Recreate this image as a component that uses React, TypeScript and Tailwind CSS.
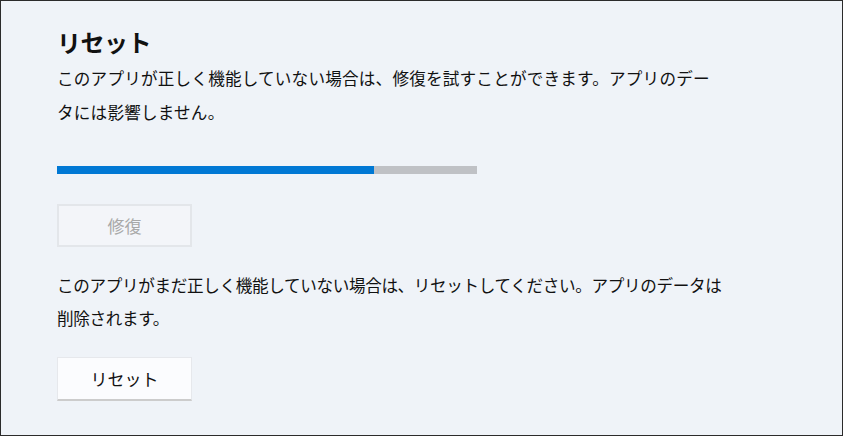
const font = { fontFamily: '"Noto Sans CJK JP", "Noto Sans", sans-serif' };

export default function App() {
  const progress = 75.5;

  return (
    <div
      className="w-[843px] h-[436px] border border-[#2b2b2b] bg-[#eff3f8] pl-[56px] pt-[25px] text-[#111111]"
      style={font}
    >
      <h1 className="text-[24px] font-bold leading-[32px] tracking-[-0.5px]">リセット</h1>

      <p className="mt-[3px] text-[16.6px] leading-[34px] tracking-[0.2px] whitespace-nowrap">
        このアプリが正しく機能していない場合は、修復を試すことができます。アプリのデー
        <br />
        タには影響しません。
      </p>

      {/* progress */}
      <div className="mt-[37px] w-[420px] h-[8px] bg-[#bfc1c5]">
        <div className="h-full bg-[#0078d4]" style={{ width: `${progress}%` }} />
      </div>

      <button
        disabled
        className="mt-[30px] w-[135px] h-[43px] border-2 border-[#e3e6ea] bg-[#f3f5f9] text-[17px] font-normal text-[#a8a8a8] flex items-center justify-center"
      >
        修復
      </button>

      <p className="mt-[22px] text-[16.6px] leading-[33px] tracking-[-0.35px] whitespace-nowrap">
        このアプリがまだ正しく機能していない場合は、リセットしてください。アプリのデータは
        <br />
        削除されます。
      </p>

      <button className="mt-[22px] w-[135px] h-[44px] border border-[#e6e8ec] border-b-2 border-b-[#cccccc] bg-[#fbfcfe] text-[17px] font-normal text-[#111111] flex items-center justify-center">
        リセット
      </button>
    </div>
  );
}
